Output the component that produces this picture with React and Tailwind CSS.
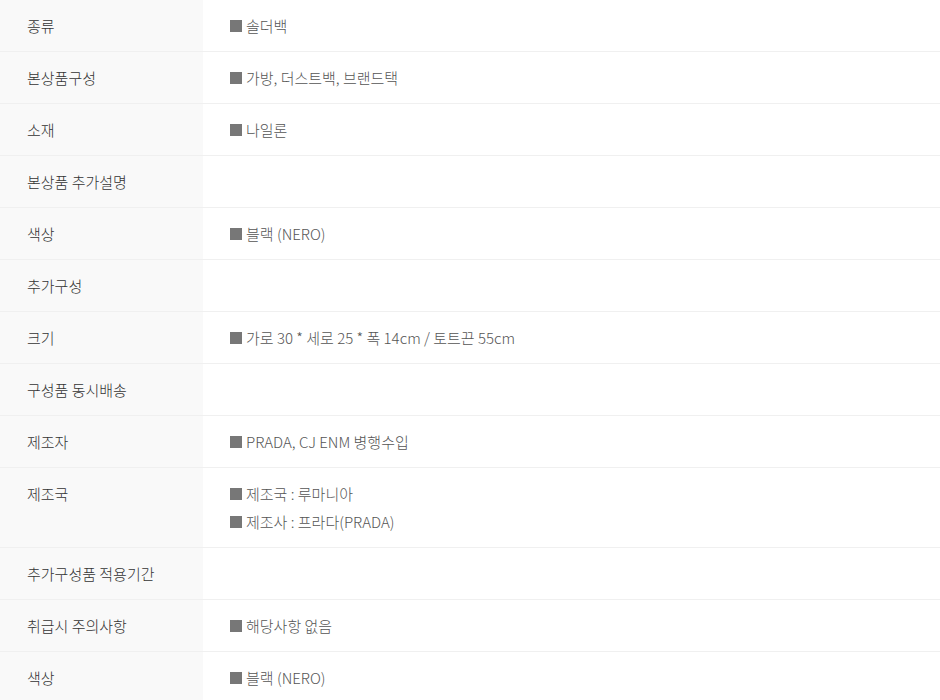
import React from 'react';

const rows = [
  { label: '종류', values: ['솔더백'] },
  { label: '본상품구성', values: ['가방, 더스트백, 브랜드택'] },
  { label: '소재', values: ['나일론'] },
  { label: '본상품 추가설명', values: [] },
  { label: '색상', values: ['블랙 (NERO)'] },
  { label: '추가구성', values: [] },
  { label: '크기', values: ['가로 30 * 세로 25 * 폭 14cm / 토트끈 55cm'] },
  { label: '구성품 동시배송', values: [] },
  { label: '제조자', values: ['PRADA, CJ ENM 병행수입'] },
  { label: '제조국', values: ['제조국 : 루마니아', '제조사 : 프라다(PRADA)'] },
  { label: '추가구성품 적용기간', values: [] },
  { label: '취급시 주의사항', values: ['해당사항 없음'] },
  { label: '색상', values: ['블랙 (NERO)'] },
];

export default function App() {
  return (
    <div
      className="w-[940px] h-[700px] overflow-hidden bg-white text-[15px] font-light"
      style={{ fontFamily: '"Noto Sans CJK KR", "Noto Sans", sans-serif' }}
    >
      {rows.map((row, i) => (
        <div key={i} className="flex border-b border-[#f0f0f0]">
          <div className="w-[203px] shrink-0 bg-[#f9f9f9] pl-[27px] py-[11.5px] leading-[28px] text-[#333]">
            {row.label}
          </div>
          <div className="flex-1 pl-[27px] py-[11.5px] leading-[28px] text-[#555]">
            {row.values.length === 0 ? (
              <div>&nbsp;</div>
            ) : (
              row.values.map((v, j) => (
                <div key={j} className="flex items-center">
                  <span className="inline-block w-[12px] h-[12px] bg-[#777] mr-[4px]" />
                  <span>{v}</span>
                </div>
              ))
            )}
          </div>
        </div>
      ))}
    </div>
  );
}
